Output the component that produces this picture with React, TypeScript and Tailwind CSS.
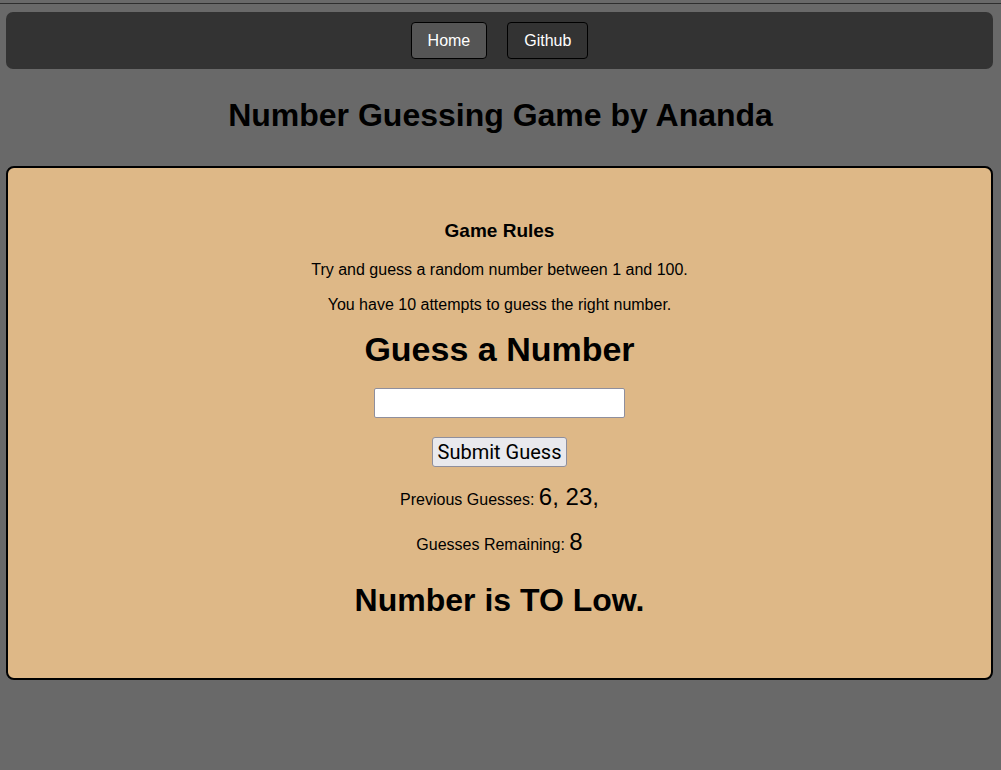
const sans = "font-['Liberation_Sans',Arial,sans-serif]";
const roboto = "font-['Roboto',sans-serif]";

function NavButton({ label, active }: { label: string; active?: boolean }) {
  return (
    <button
      className={`h-[37px] rounded-[4px] border border-black px-4 text-base text-white ${sans} ${
        active ? "bg-[#555555]" : "bg-[#333333]"
      }`}
    >
      {label}
    </button>
  );
}

export default function App() {
  const guesses = [6, 23];
  const remaining = 8;

  return (
    <div className={`min-h-[770px] bg-[#696969] pt-[3px] text-black ${sans}`}>
      <div className="h-px bg-[#2e2e2e]" />
      <nav className="ml-[6px] mr-[8px] mt-[8px] flex h-[57px] items-center justify-center gap-5 rounded-[7px] bg-[#333333]">
        <NavButton label="Home" active />
        <NavButton label="Github" />
      </nav>

      <h1 className="mt-[28px] text-center text-[32px] font-bold leading-[37px]">
        Number Guessing Game by Ananda
      </h1>

      <main className="ml-[6px] mr-[8px] mt-[32px] flex h-[514px] flex-col items-center rounded-[8px] border-2 border-black bg-[#deb887] pt-[52px]">
        <h3 className="text-[19px] font-bold leading-[22px]">Game Rules</h3>
        <p className="mt-[19px] text-base leading-[18px]">
          Try and guess a random number between 1 and 100.
        </p>
        <p className="mt-[17px] text-base leading-[18px]">
          You have 10 attempts to guess the right number.
        </p>
        <h2 className="mt-[16px] text-[34px] font-bold leading-[39px]">Guess a Number</h2>

        <input
          type="text"
          className="mt-[19px] h-[30px] w-[251px] rounded-[2px] border border-[#8f8f9d] bg-white"
        />
        <button
          className={`mt-[19px] h-[30px] rounded-[3px] border border-[#8f8f9d] bg-[#e9e9ed] px-[5px] text-[20px] leading-[24px] ${roboto}`}
        >
          Submit Guess
        </button>

        <p className="mt-[16px] text-center text-base leading-[28px]">
          Previous Guesses:{" "}
          <span className="text-[24px]">{guesses.map((g) => `${g}, `).join("")}</span>
        </p>
        <p className="mt-[14px] text-center text-base leading-[28px]">
          Guesses Remaining: <span className="text-[24px]">{remaining}</span>
        </p>

        <h2 className="mt-[23px] text-[32px] font-bold leading-[37px]">Number is TO Low.</h2>
      </main>
    </div>
  );
}
